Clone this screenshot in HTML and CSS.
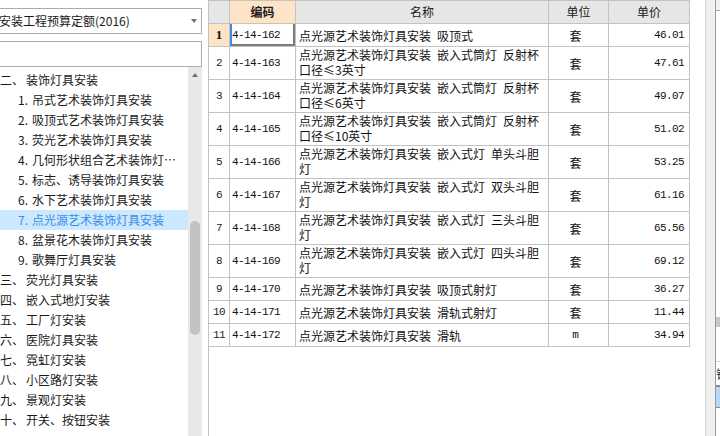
FILE: index.html
```html
<!DOCTYPE html>
<html lang="zh-CN">
<head>
<meta charset="utf-8">
<title>定额</title>
<link rel="stylesheet" href="styles.css">
</head>
<body>
<div class="app">
  <aside class="side">
    <div class="combo"><span class="combo-text">安装工程预算定额(2016)</span><span class="caret"></span></div>
    <div class="search"></div>
    <div class="tree-wrap">
      <ul class="tree">
        <li class="lv1"><span class="no">二、</span>装饰灯具安装</li>
        <li class="lv2"><span class="no">1.</span>吊式艺术装饰灯具安装</li>
        <li class="lv2"><span class="no">2.</span>吸顶式艺术装饰灯具安装</li>
        <li class="lv2"><span class="no">3.</span>荧光艺术装饰灯具安装</li>
        <li class="lv2"><span class="no">4.</span>几何形状组合艺术装饰灯具安装</li>
        <li class="lv2"><span class="no">5.</span>标志、诱导装饰灯具安装</li>
        <li class="lv2"><span class="no">6.</span>水下艺术装饰灯具安装</li>
        <li class="lv2 sel"><span class="no">7.</span>点光源艺术装饰灯具安装</li>
        <li class="lv2"><span class="no">8.</span>盆景花木装饰灯具安装</li>
        <li class="lv2"><span class="no">9.</span>歌舞厅灯具安装</li>
        <li class="lv1"><span class="no">三、</span>荧光灯具安装</li>
        <li class="lv1"><span class="no">四、</span>嵌入式地灯安装</li>
        <li class="lv1"><span class="no">五、</span>工厂灯安装</li>
        <li class="lv1"><span class="no">六、</span>医院灯具安装</li>
        <li class="lv1"><span class="no">七、</span>霓虹灯安装</li>
        <li class="lv1"><span class="no">八、</span>小区路灯安装</li>
        <li class="lv1"><span class="no">九、</span>景观灯安装</li>
        <li class="lv1"><span class="no">十、</span>开关、按钮安装</li>
      </ul>
      <div class="vscroll"><span class="up"></span><span class="thumb"></span></div>
    </div>
  </aside>

  <main class="grid">
    <table class="quota">
      <colgroup>
        <col class="c-idx"><col class="c-code"><col class="c-name"><col class="c-unit"><col class="c-price">
      </colgroup>
      <thead>
        <tr>
          <th class="idx"></th>
          <th class="hl">编码</th>
          <th>名称</th>
          <th>单位</th>
          <th>单价</th>
        </tr>
      </thead>
      <tbody>
        <tr>
          <td class="idx cur">1</td>
          <td class="code focus">4-14-162</td>
          <td class="name"><div class="nm">点光源艺术装饰灯具安装 吸顶式</div></td>
          <td class="unit">套</td>
          <td class="price">46.01</td>
        </tr>
        <tr class="tall">
          <td class="idx">2</td>
          <td class="code">4-14-163</td>
          <td class="name"><div class="nm">点光源艺术装饰灯具安装 嵌入式筒灯 反射杯口径≤3英寸</div></td>
          <td class="unit">套</td>
          <td class="price">47.61</td>
        </tr>
        <tr class="tall">
          <td class="idx">3</td>
          <td class="code">4-14-164</td>
          <td class="name"><div class="nm">点光源艺术装饰灯具安装 嵌入式筒灯 反射杯口径≤6英寸</div></td>
          <td class="unit">套</td>
          <td class="price">49.07</td>
        </tr>
        <tr class="tall">
          <td class="idx">4</td>
          <td class="code">4-14-165</td>
          <td class="name"><div class="nm">点光源艺术装饰灯具安装 嵌入式筒灯 反射杯口径≤10英寸</div></td>
          <td class="unit">套</td>
          <td class="price">51.02</td>
        </tr>
        <tr class="tall">
          <td class="idx">5</td>
          <td class="code">4-14-166</td>
          <td class="name"><div class="nm">点光源艺术装饰灯具安装 嵌入式灯 单头斗胆灯</div></td>
          <td class="unit">套</td>
          <td class="price">53.25</td>
        </tr>
        <tr class="tall">
          <td class="idx">6</td>
          <td class="code">4-14-167</td>
          <td class="name"><div class="nm">点光源艺术装饰灯具安装 嵌入式灯 双头斗胆灯</div></td>
          <td class="unit">套</td>
          <td class="price">61.16</td>
        </tr>
        <tr class="tall">
          <td class="idx">7</td>
          <td class="code">4-14-168</td>
          <td class="name"><div class="nm">点光源艺术装饰灯具安装 嵌入式灯 三头斗胆灯</div></td>
          <td class="unit">套</td>
          <td class="price">65.56</td>
        </tr>
        <tr class="tall">
          <td class="idx">8</td>
          <td class="code">4-14-169</td>
          <td class="name"><div class="nm">点光源艺术装饰灯具安装 嵌入式灯 四头斗胆灯</div></td>
          <td class="unit">套</td>
          <td class="price">69.12</td>
        </tr>
        <tr>
          <td class="idx">9</td>
          <td class="code">4-14-170</td>
          <td class="name"><div class="nm">点光源艺术装饰灯具安装 吸顶式射灯</div></td>
          <td class="unit">套</td>
          <td class="price">36.27</td>
        </tr>
        <tr>
          <td class="idx">10</td>
          <td class="code">4-14-171</td>
          <td class="name"><div class="nm">点光源艺术装饰灯具安装 滑轨式射灯</div></td>
          <td class="unit">套</td>
          <td class="price">11.44</td>
        </tr>
        <tr>
          <td class="idx">11</td>
          <td class="code">4-14-172</td>
          <td class="name"><div class="nm">点光源艺术装饰灯具安装 滑轨</div></td>
          <td class="unit mono">m</td>
          <td class="price">34.94</td>
        </tr>
      </tbody>
    </table>
  </main>

  <div class="splitter"></div>

  <div class="rpanel">
    <div class="rp-top"></div>
    <div class="rp-body"></div>
    <div class="rp-bar"></div>
    <div class="rp-gap"></div>
    <div class="rp-head">销售价</div>
    <div class="rp-sel"></div>
    <div class="rp-rest"></div>
  </div>
</div>
</body>
</html>
```

FILE: styles.css
```css
* {
  box-sizing: border-box;
  margin: 0;
  padding: 0;
}

html, body {
  width: 720px;
  height: 436px;
  overflow: hidden;
  background: #ffffff;
}

body {
  font-family: "Noto Sans CJK SC", "Microsoft YaHei", sans-serif;
  font-size: 12px;
  color: #1a1a1a;
}

.app {
  display: flex;
  height: 436px;
}

/* ---------- left side ---------- */
.side {
  width: 202px;
  flex: none;
  display: flex;
  flex-direction: column;
  padding-top: 8px;
}

.combo {
  height: 26px;
  border: 1px solid #acacac;
  border-left: none;
  display: flex;
  align-items: center;
  justify-content: space-between;
  padding-right: 4px;
  line-height: 20px;
}

.combo-text {
  white-space: nowrap;
  margin-left: -1px;
}

.caret {
  width: 0;
  height: 0;
  border-left: 3px solid transparent;
  border-right: 3px solid transparent;
  border-top: 4px solid #6e6e6e;
}

.search {
  height: 26px;
  margin-top: 7px;
  border: 1px solid #acacac;
  border-left: none;
}

.tree-wrap {
  flex: 1;
  min-height: 0;
  display: flex;
  overflow: hidden;
}

.tree {
  flex: 1;
  min-width: 0;
  list-style: none;
  padding-top: 3px;
  overflow: hidden;
}

.tree li {
  height: 20px;
  line-height: 20px;
  white-space: nowrap;
  overflow: hidden;
  text-overflow: ellipsis;
  padding-right: 2px;
}

.lv1 .no {
  display: inline-block;
  min-width: 26px;
}

.lv2 {
  padding-left: 18px;
}

.lv2 .no {
  display: inline-block;
  width: 14px;
}

.tree li.sel {
  background: #cce8ff;
  color: #3a8ee6;
}

.vscroll {
  width: 14px;
  flex: none;
  background: #e8e8e8;
  display: flex;
  flex-direction: column;
  align-items: center;
}

.up {
  margin-top: 6px;
  width: 0;
  height: 0;
  border-left: 3px solid transparent;
  border-right: 3px solid transparent;
  border-bottom: 4px solid #707070;
}

.thumb {
  margin-top: 144px;
  width: 10px;
  height: 114px;
  border-radius: 5px;
  background: #c2c2c2;
}

/* ---------- grid ---------- */
.grid {
  width: 497px;
  flex: none;
  margin-left: 6px;
  border-left: 1px solid #c3c3c3;
  background: #ffffff;
}

.quota {
  width: 481px;
  table-layout: fixed;
  border-collapse: separate;
  border-spacing: 0;
}

.c-idx { width: 21px; }
.c-code { width: 66px; }
.c-name { width: 253px; }
.c-unit { width: 60px; }
.c-price { width: 81px; }

.quota th,
.quota td {
  border-right: 1px solid #c3c3c3;
  border-bottom: 1px solid #c3c3c3;
  padding: 0;
  white-space: nowrap;
  overflow: hidden;
}

.quota th {
  height: 24px;
  border-top: 1px solid #c3c3c3;
  background: #e6e6e6;
  font-weight: normal;
  text-align: center;
  line-height: 20px;
}

.quota th.hl {
  background: #fde4c6;
  font-weight: bold;
}

.quota td {
  height: 23px;
  vertical-align: middle;
}

.quota tr.tall td {
  height: 33px;
}

.quota td.idx {
  text-align: center;
  font-family: "Liberation Mono", "DejaVu Sans Mono", monospace;
  font-size: 11px;
  letter-spacing: -0.6px;
  color: #222;
}

.quota td.idx.cur {
  background: #fde4c6;
  font-family: "Liberation Serif", serif;
  font-size: 13px;
  font-weight: bold;
  letter-spacing: 0;
  color: #111;
}

.quota td.code {
  padding-left: 2px;
  font-family: "Liberation Mono", "DejaVu Sans Mono", monospace;
  font-size: 11px;
  letter-spacing: -0.6px;
  color: #111;
}

.quota td.focus {
  box-shadow: inset 2px 0 0 #3c8ce6, inset -2px -2px 0 #7c7c7c;
}

.quota td.name {
  padding-left: 3px;
  white-space: normal;
}

.nm {
  max-width: 245px;
  line-height: 15px;
  word-spacing: 3.3px;
  color: #111;
}

.tall .nm {
  margin-top: -3px;
}

.quota td.unit {
  text-align: center;
  padding-right: 6px;
  color: #111;
}

.quota td.unit.mono {
  font-family: "Liberation Mono", "DejaVu Sans Mono", monospace;
  font-size: 11px;
}

.quota td.price {
  text-align: right;
  padding-right: 5px;
  font-family: "Liberation Mono", "DejaVu Sans Mono", monospace;
  font-size: 11px;
  letter-spacing: -0.6px;
  color: #111;
}

/* ---------- splitter & right panel ---------- */
.splitter {
  width: 11px;
  flex: none;
  border-left: 1px solid #d6d6d6;
  border-right: 1px solid #9a9a9a;
  background: #f0f0f0;
}

.rpanel {
  flex: 1;
  min-width: 0;
  overflow: hidden;
  display: flex;
  flex-direction: column;
  background: #ffffff;
}

.rp-top {
  height: 11px;
  background: #f0f0f0;
  border-bottom: 1px solid #a8a8a8;
}

.rp-body {
  height: 306px;
}

.rp-bar {
  height: 10px;
  background: #c8c8c8;
}

.rp-gap {
  height: 35px;
  border-bottom: 1px solid #d0d0d0;
}

.rp-head {
  height: 23px;
  line-height: 23px;
  white-space: nowrap;
  color: #222;
}

.rp-sel {
  height: 23px;
  border-top: 2px solid #8a8a8a;
  border-bottom: 1px solid #8a8a8a;
  background: #b6d6fa;
}

.rp-rest {
  flex: 1;
}
```
